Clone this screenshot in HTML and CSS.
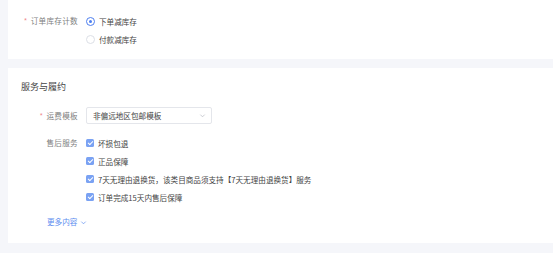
FILE: index.html
```html
<!DOCTYPE html>
<html lang="zh-CN">
<head>
    <meta charset="UTF-8">
    <title>服务与履约</title>
    <link rel="stylesheet" href="styles.css">
</head>
<body>
    <div class="card card-stock">
        <div class="row">
            <div class="label"><span class="req">*</span>订单库存计数</div>
            <div class="options">
                <div class="opt"><span class="radio checked"></span>下单减库存</div>
                <div class="opt"><span class="radio"></span>付款减库存</div>
            </div>
        </div>
    </div>

    <div class="card card-service">
        <div class="title">服务与履约</div>

        <div class="row row-select">
            <div class="label"><span class="req">*</span>运费模板</div>
            <div class="select">
                <span>非偏远地区包邮模板</span>
                <svg class="arrow" viewBox="0 0 8 8" width="7" height="7"><path d="M1.5 3l2.5 2.5L6.5 3" fill="none" stroke="#b5b8c0" stroke-width="0.8"/></svg>
            </div>
        </div>

        <div class="row">
            <div class="label">售后服务</div>
            <div class="options">
                <div class="opt"><span class="check"></span>坏损包退</div>
                <div class="opt"><span class="check"></span>正品保障</div>
                <div class="opt"><span class="check"></span>7天无理由退换货，该类目商品须支持【7天无理由退换货】服务</div>
                <div class="opt"><span class="check"></span>订单完成15天内售后保障</div>
            </div>
        </div>

        <div class="more">更多内容
            <svg viewBox="0 0 8 8" width="7" height="7"><path d="M1.5 3l2.5 2.5L6.5 3" fill="none" stroke="#5b8def" stroke-width="0.8"/></svg>
        </div>
    </div>
</body>
</html>
```

FILE: styles.css
```css
html, body {
    margin: 0;
    padding: 0;
}

body {
    background: #f5f6fa;
    font-family: "Noto Sans CJK SC", "Noto Sans", sans-serif;
    font-size: 7.6px;
    color: #444;
    height: 253px;
    overflow: hidden;
}

.card {
    background: #fff;
    margin-left: 8px;
}

.card-stock {
    padding: 12px 0 11px;
}

.card-service {
    margin-top: 9px;
    padding: 12px 0 14px;
}

.title {
    font-size: 9px;
    line-height: 14px;
    color: #444;
    padding-left: 13px;
    margin-bottom: 13px;
}

.row {
    display: flex;
    gap: 8px;
}

.row + .row {
    margin-top: 10px;
}

.label {
    width: 70px;
    text-align: right;
    color: #808080;
    line-height: 18px;
    flex-shrink: 0;
    letter-spacing: 0.3px;
}

.req {
    color: #f08a8a;
    margin-right: 3px;
}

.options {
    display: flex;
    flex-direction: column;
}

.opt {
    display: flex;
    align-items: center;
    height: 18px;
    gap: 4px;
    color: #444;
}

.radio {
    width: 7px;
    height: 7px;
    border: 1px solid #dcdfe6;
    border-radius: 50%;
    box-sizing: content-box;
    position: relative;
}

.radio.checked {
    border-color: #4e7ff0;
}

.radio.checked::after {
    content: "";
    position: absolute;
    left: 2px;
    top: 2px;
    width: 3px;
    height: 3px;
    border-radius: 50%;
    background: #4e7ff0;
}

.check {
    width: 8px;
    height: 8px;
    border-radius: 1.5px;
    background: #7aa2f3;
    position: relative;
}

.check::after {
    content: "";
    position: absolute;
    left: 2.6px;
    top: 1px;
    width: 2px;
    height: 4px;
    border: solid #fff;
    border-width: 0 1px 1px 0;
    transform: rotate(45deg);
}

.row-select .label {
    line-height: 17px;
}

.select {
    width: 126px;
    height: 17px;
    box-sizing: border-box;
    border: 1px solid #e4e6eb;
    border-radius: 2px;
    display: flex;
    align-items: center;
    justify-content: space-between;
    padding: 0 5px 0 6px;
    color: #444;
}

.more {
    margin-top: 9px;
    padding-left: 39px;
    line-height: 14px;
    color: #5b8def;
    display: flex;
    align-items: center;
    gap: 3px;
}
```
